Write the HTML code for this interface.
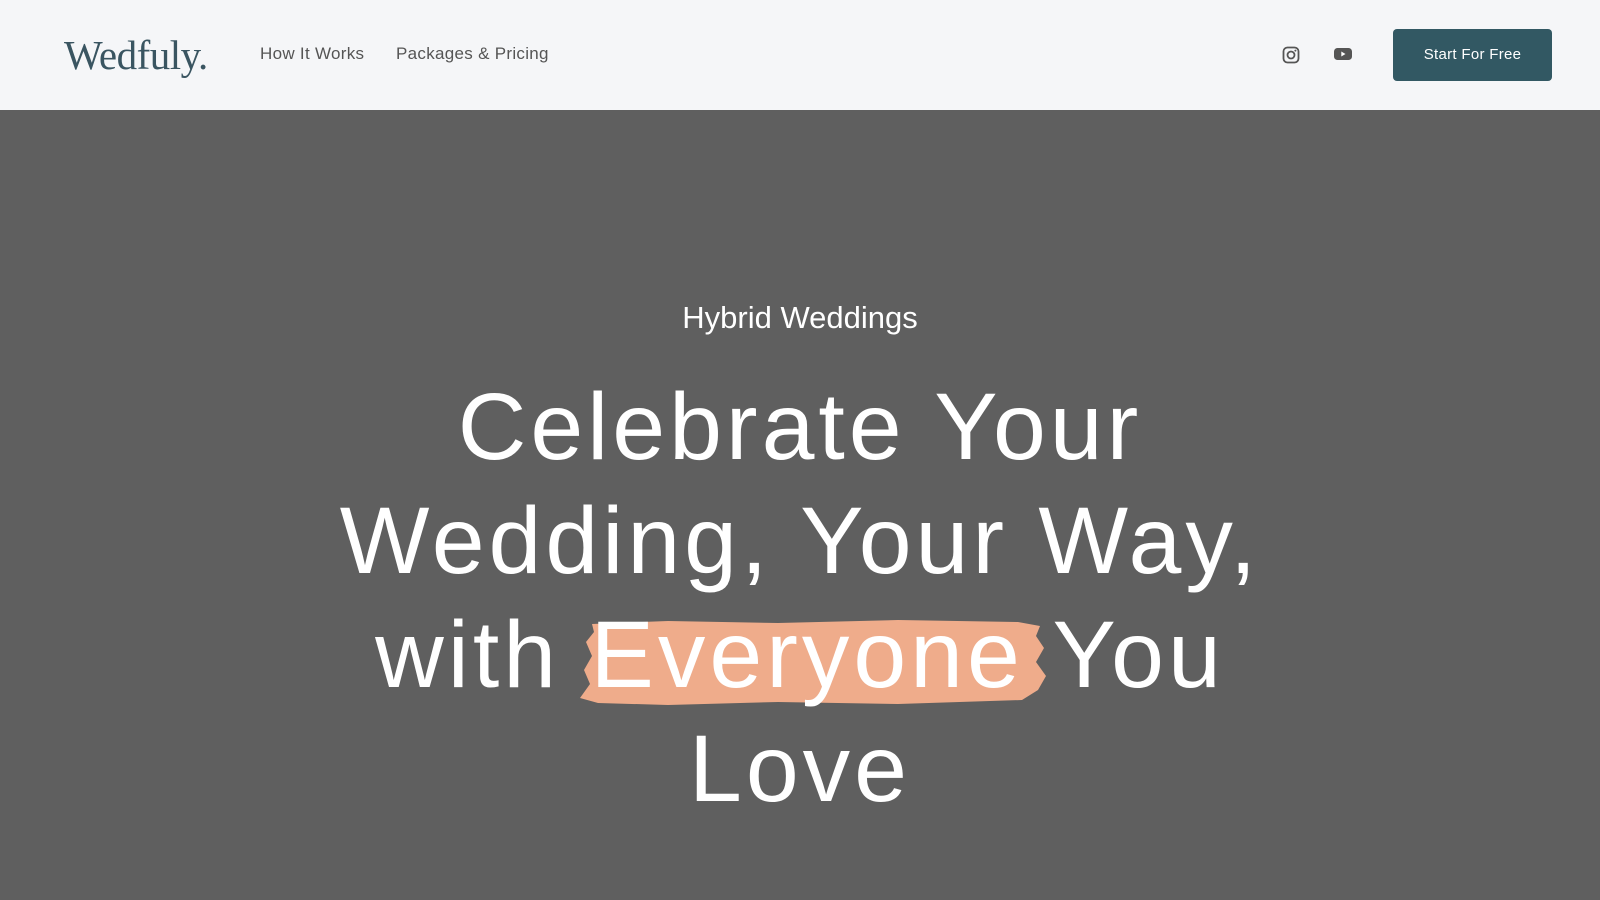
<!DOCTYPE html>
<html><head><meta charset="utf-8"><style>
*{margin:0;padding:0;box-sizing:border-box}
body{width:1600px;height:900px;overflow:hidden;background:#5f5f5f;font-family:"Liberation Sans",sans-serif;position:relative}
header{position:absolute;left:0;top:0;width:1600px;height:110px;background:#f5f6f8}
.logo{position:absolute;left:64px;top:31px;font-family:"Liberation Serif",serif;font-size:41px;color:#3a5561;letter-spacing:-0.5px}
.nav{position:absolute;top:44px;font-size:17px;color:#555;letter-spacing:0.3px}
.btn{position:absolute;left:1393px;top:29px;width:159px;height:52px;background:#325863;border-radius:4px;color:#fff;font-size:15px;text-align:center;line-height:52px;letter-spacing:0.3px}
.sub{position:absolute;left:0;width:1600px;top:298px;line-height:40px;text-align:center;color:#fff;font-size:31px}
.l{position:absolute;left:0;width:1600px;text-align:center;color:#fff;font-size:95px;line-height:114px;white-space:nowrap;letter-spacing:4px;z-index:1}
</style></head><body>
<header>
<div class="logo">Wedfuly.</div>
<div class="nav" style="left:260px">How It Works</div>
<div class="nav" style="left:396px">Packages &amp; Pricing</div>
<svg style="position:absolute;left:1282px;top:46px" width="18" height="18" viewBox="0 0 18 18"><rect x="1.5" y="1.5" width="15" height="15" rx="4" fill="none" stroke="#555" stroke-width="1.8"/><circle cx="9" cy="9" r="3.5" fill="none" stroke="#555" stroke-width="1.8"/><circle cx="13.4" cy="4.6" r="1" fill="#555"/></svg>
<svg style="position:absolute;left:1334px;top:47px" width="18" height="14" viewBox="0 0 18 14"><rect x="0" y="1" width="18" height="12" rx="3.5" fill="#555"/><path d="M7.3 4.5 L11.5 7 L7.3 9.5Z" fill="#fff"/></svg>
<div class="btn">Start For Free</div>
</header>
<svg style="position:absolute;left:578px;top:618px" width="472" height="90" viewBox="0 0 472 90"><path d="M14 6 L90 3 L200 5 L320 2 L440 4 L462 8 L458 18 L466 30 L458 44 L468 58 L460 72 L444 82 L320 86 L200 84 L90 87 L20 85 L2 80 L12 66 L6 52 L14 38 L8 24 L16 14Z" fill="#efac8b"/></svg>
<div class="sub">Hybrid Weddings</div>
<div class="l" style="top:370px">Celebrate Your</div>
<div class="l" style="top:484px">Wedding, Your Way,</div>
<div class="l" style="top:598px">with Everyone You</div>
<div class="l" style="top:712px">Love</div>
</body></html>
